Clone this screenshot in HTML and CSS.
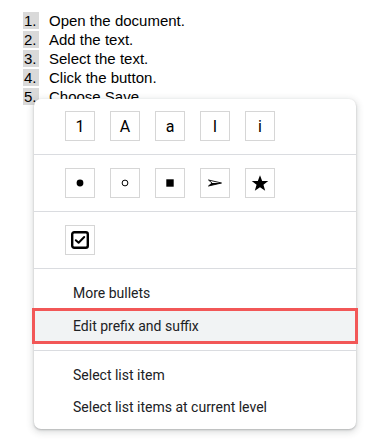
FILE: index.html
```html
<!DOCTYPE html>
<html>
<head>
<meta charset="utf-8">
<link rel="stylesheet" href="styles.css">
</head>
<body>
<ol class="doc-list">
  <li class="doc-item"><span class="num">1.</span><span>Open the document.</span></li>
  <li class="doc-item"><span class="num">2.</span><span>Add the text.</span></li>
  <li class="doc-item"><span class="num">3.</span><span>Select the text.</span></li>
  <li class="doc-item"><span class="num">4.</span><span>Click the button.</span></li>
  <li class="doc-item"><span class="num">5.</span><span>Choose Save.</span></li>
</ol>

<div class="menu">
  <div class="section boxes">
    <div class="box">1</div>
    <div class="box">A</div>
    <div class="box">a</div>
    <div class="box">I</div>
    <div class="box">i</div>
  </div>
  <div class="section boxes">
    <div class="box"><svg width="10" height="10" viewBox="0 0 10 10"><circle cx="5" cy="5" r="3.4" fill="#000"/></svg></div>
    <div class="box"><svg width="10" height="10" viewBox="0 0 10 10"><circle cx="5" cy="5" r="2.9" fill="none" stroke="#000" stroke-width="1"/></svg></div>
    <div class="box"><svg width="10" height="10" viewBox="0 0 10 10"><rect x="1.3" y="1.3" width="7.4" height="7.4" fill="#000"/></svg></div>
    <div class="box"><svg width="16" height="10" viewBox="0 0 16 10"><path d="M1.5 2 L14.5 5 L1.5 8 L5 5 Z" fill="none" stroke="#000" stroke-width="0.9" stroke-linejoin="miter"/><path d="M5 5 L14.5 5 L1.5 8 Z" fill="#000"/></svg></div>
    <div class="box"><svg width="18" height="18" viewBox="0 0 24 24"><path d="M12 1.5 L14.9 9.2 L23 9.4 L16.6 14.4 L18.9 22.3 L12 17.7 L5.1 22.3 L7.4 14.4 L1 9.4 L9.1 9.2 Z" fill="#000"/></svg></div>
  </div>
  <div class="section boxes">
    <div class="box"><svg width="20" height="20" viewBox="0 0 20 20"><rect x="2.2" y="2.2" width="15.6" height="15.6" rx="2" fill="none" stroke="#000" stroke-width="2.4"/><path d="M5.8 10.2 L8.6 12.8 L14.2 7" fill="none" stroke="#000" stroke-width="2" stroke-linecap="round" stroke-linejoin="round"/></svg></div>
  </div>
  <div class="section items">
    <div class="item">More bullets</div>
    <div class="item hovered">Edit prefix and suffix</div>
  </div>
  <div class="section items last">
    <div class="item">Select list item</div>
    <div class="item">Select list items at current level</div>
  </div>
</div>
</body>
</html>
```

FILE: styles.css
```css
html, body {
  margin: 0;
  padding: 0;
  background: #fff;
}
body {
  position: relative;
  width: 380px;
  height: 440px;
  overflow: hidden;
  font-family: "Liberation Sans", Arial, sans-serif;
}
.doc-list {
  list-style: none;
  margin: 0;
  padding: 12px 0 0 23px;
  display: flex;
  flex-direction: column;
  gap: 2px;
}
.doc-item {
  display: flex;
  align-items: center;
  gap: 10px;
  height: 17px;
  font-size: 15px;
  color: #000;
}
.num {
  background: #d9d9d9;
  width: 16px;
  height: 17px;
  line-height: 17px;
  padding-left: 1px;
  box-sizing: border-box;
}
.menu {
  position: absolute;
  left: 34px;
  top: 99px;
  width: 322px;
  background: #fff;
  border-radius: 7px;
  box-shadow: 0 2px 6px 2px rgba(60, 64, 67, 0.15), 0 1px 2px rgba(60, 64, 67, 0.3);
  font-family: Roboto, "Liberation Sans", sans-serif;
}
.section {
  border-bottom: 1px solid #dadce0;
}
.section.last {
  border-bottom: none;
}
.boxes {
  display: flex;
  gap: 15px;
  padding: 12px 0 13px 31px;
}
.section.boxes + .section.boxes {
  padding-top: 13px;
}
.box {
  width: 30px;
  height: 30px;
  box-sizing: border-box;
  border: 1px solid #d6d6d6;
  display: flex;
  align-items: center;
  justify-content: center;
  font-size: 16px;
  color: #000;
}
.items {
  padding: 8px 0 7px;
}
.items.last {
  padding: 8px 0 6px;
}
.item {
  height: 32px;
  line-height: 32px;
  padding-left: 39px;
  font-size: 14px;
  color: #202124;
}
.item.hovered {
  background: #f1f3f4;
  outline: 3px solid #f25757;
  outline-offset: -2px;
  height: 34px;
  line-height: 34px;
  margin: 0 -1px;
  padding-left: 40px;
}
```
